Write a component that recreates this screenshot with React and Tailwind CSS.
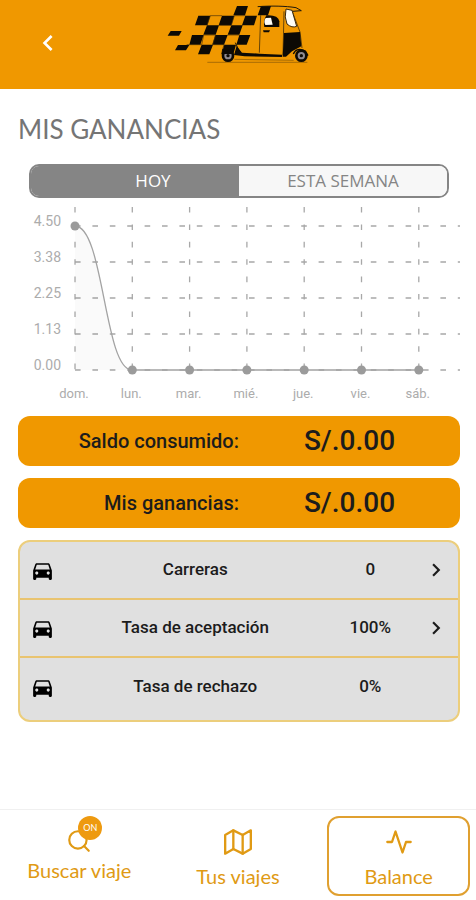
import React, { useState } from 'react';
import { MdChevronLeft, MdChevronRight, MdDirectionsCar } from 'react-icons/md';
import { FiActivity, FiMap, FiSearch } from 'react-icons/fi';

const days = ['dom.', 'lun.', 'mar.', 'mié.', 'jue.', 'vie.', 'sáb.'];
const levels = ['4.50', '3.38', '2.25', '1.13', '0.00'];

const balances = [
  { label: 'Saldo consumido:', value: 'S/.0.00' },
  { label: 'Mis ganancias:', value: 'S/.0.00' },
];

const stats = [
  { label: 'Carreras', value: '0', link: true },
  { label: 'Tasa de aceptación', value: '100%', link: true },
  { label: 'Tasa de rechazo', value: '0%', link: false },
];

const Logo = () => (
  <svg viewBox="50 0 432 267" className="w-36 h-[89px]" role="img" aria-label="Mototaxi">
    {/* checkered flag */}
    <g fill="#0d0a05">
      <path d="M263 18h33l-9 28h-35zM335 18h30l-9 28h-31zM147 47h36l-9 29h-37zM218 47h37l-9 29h-38zM288 47h35l-9 29h-36z" />
      <path d="M173 76h36l-10 28h-37zM246 76h34l-10 28h-35zM128 105h35l-10 29h-33zM198 105h37l-11 29h-35zM270 105h33l-11 29h-31z" />
      <path d="M157 134h34l-11 29h-34zM225 134h35l-8 29h-36zM64 93h33l-8 14H55zM86 135h34l-10 16H77z" />
    </g>
    <g fill="none" stroke="#4a3107" strokeWidth="2">
      <path d="M183 47h35M255 47h33M209 76h37M163 105h35M235 105h35M191 134h34M112 134h45" />
      <path d="M183 47l-10 29M255 47l-9 29M199 104l-9 30M163 105l-6 29M224 134l-8 29" />
    </g>
    {/* body */}
    <g fill="none" stroke="#20180a" strokeWidth="3">
      <path d="M325 20C365 17 410 18 440 23l16 9-26 2" />
      <path d="M334 46l-4 112M404 34l-3 132M427 30l25 66 6 48" strokeWidth="2" />
      <path d="M258 128q8 20 18 34" />
    </g>
    <path d="M262 138l16 20 52 3 68 3v7l-112-2-32-4z" fill="#0d0a05" />
    <path d="M351 46q36-2 39 18v17h-45q-4-18 6-35z" fill="#0d0a05" />
    <path d="M349 54l16-1 5 21-22 1q-6-10 1-21z" fill="#fffdf5" />
    <path d="M341 91h21l-3 6h-16z" fill="#0d0a05" />
    <path d="M410 27l18 4 14 48q-14 6-29-7-9-20-3-45z" fill="#fffdf5" stroke="#39270a" strokeWidth="3" />
    <path d="M404 99l48-3 4 43-28 15-18 16h-10z" fill="#0d0a05" />
    <path d="M432 162q10-22 36-9l8 14" fill="none" stroke="#0d0a05" strokeWidth="4" />
    {/* wheels and road */}
    <path d="M174 187h300M255 178l178 3" stroke="#875706" strokeWidth="2" />
    {[236, 456].map((x) => (
      <g key={x}>
        <circle cx={x} cy="167" r="15" fill="#8f8a91" stroke="#0d0a05" strokeWidth="8" />
        <circle cx={x} cy="167" r="5" fill="#0d0a05" />
      </g>
    ))}
    <path d="M218 148h34l-3 14h-29z" fill="#0d0a05" />
  </svg>
);

const Chart = () => (
  <svg viewBox="0 0 442 206" className="w-full" role="img" aria-label="Ganancias por día">
    <g stroke="#a8a8a8" strokeWidth="1.3" strokeDasharray="5.6 11.8">
      {days.map((day, i) => (
        <line key={day} x1={57 + i * 57.3} x2={57 + i * 57.3} y1="9" y2="173" />
      ))}
      {levels.map((level, i) => (
        <line key={level} x1="57" x2="442" y1={28 + i * 36} y2={28 + i * 36} />
      ))}
    </g>
    <path d="M57 28C86 28 86 172 114 172H401V172H57z" fill="#000" fillOpacity="0.02" />
    <path d="M57 28C86 28 86 172 114 172H401" fill="none" stroke="#a3a3a3" strokeWidth="1.3" />
    {days.map((day, i) => (
      <circle key={day} cx={57 + i * 57.3} cy={i === 0 ? 28 : 172} r="4.5" fill="#9b9b9b" />
    ))}
    <g fill="#acacac" fontFamily="Roboto, sans-serif">
      {levels.map((level, i) => (
        <text key={level} x="43" y={28 + i * 36} fontSize="14" textAnchor="end">{level}</text>
      ))}
      {days.map((day, i) => (
        <text key={day} x={56 + i * 57.3} y="200" fontSize="13" textAnchor="middle">{day}</text>
      ))}
    </g>
  </svg>
);

const App = () => {
  const [period, setPeriod] = useState('hoy');

  const tabStyle = (name) =>
    period === name ? 'bg-[#858585] text-white' : 'bg-[#f7f7f7] text-[#858585]';

  return (
    <div className="min-h-screen flex flex-col bg-white font-['Roboto',sans-serif] text-[#1c1c1c]">
      <header className="grid grid-cols-[1fr_auto_1fr] items-center bg-[#f09800]">
        <button aria-label="Volver" className="mb-1 ml-8 w-8 text-white">
          <MdChevronLeft size={32} />
        </button>
        <Logo />
      </header>

      <main className="flex-1 pl-[18px] pr-4 pt-6">
        <h1 className="font-['Lato',sans-serif] text-[26px] leading-8 text-[#757575]">MIS GANANCIAS</h1>

        <div className="mt-[19px] mx-[11px] flex h-[34px] overflow-hidden rounded-[10px] border-2 border-[#858585] font-['Open_Sans',sans-serif] text-[17px]">
          <button onClick={() => setPeriod('hoy')} className={`w-1/2 pl-9 ${tabStyle('hoy')}`}>
            HOY
          </button>
          <button onClick={() => setPeriod('semana')} className={`w-1/2 ${tabStyle('semana')}`}>
            ESTA SEMANA
          </button>
        </div>

        <Chart />

        <div className="mt-3 flex flex-col gap-3">
          {balances.map((item) => (
            <div key={item.label} className="grid h-[50px] grid-cols-2 items-center rounded-xl bg-[#f09800] font-medium">
              <span className="text-right text-[20px]">{item.label}</span>
              <span className="text-center text-[28px]">{item.value}</span>
            </div>
          ))}
        </div>

        <ul className="mt-3 divide-y-2 divide-[#e9c470] overflow-hidden rounded-xl border-2 border-[#ecce7c] bg-[#e0e0e0] text-[17px] font-medium">
          {stats.map((stat) => (
            <li key={stat.label} className="grid h-[58px] grid-cols-[44px_3fr_1fr_44px] items-center text-center last:h-[62px] last:pb-1">
              <MdDirectionsCar size={25} className="justify-self-center text-black" />
              <span>{stat.label}</span>
              <span>{stat.value}</span>
              {stat.link && (
                <button aria-label={stat.label} className="justify-self-center">
                  <MdChevronRight size={26} />
                </button>
              )}
            </li>
          ))}
        </ul>
      </main>

      <nav className="grid h-[91px] grid-cols-3 border-t border-[#f0f0f0] font-['Lato',sans-serif] text-xl leading-6 text-[#e09a14]">
        <a href="#buscar" className="flex flex-col items-center pt-[18px]">
          <span className="relative">
            <FiSearch size={26} />
            <span className="absolute -top-3 left-3 flex size-6 items-center justify-center rounded-full bg-[#ee9a10] text-[9px] text-white">
              ON
            </span>
          </span>
          <span className="mt-1">Buscar viaje</span>
        </a>
        <a href="#viajes" className="flex flex-col items-center pt-[18px]">
          <FiMap size={28} />
          <span className="mt-2">Tus viajes</span>
        </a>
        <a href="#balance" className="ml-2.5 mr-1.5 mt-1.5 mb-1 flex flex-col items-center rounded-xl border-2 border-[#e0a030] pt-2.5">
          <FiActivity size={28} />
          <span className="mt-2">Balance</span>
        </a>
      </nav>
    </div>
  );
};

export default App;
